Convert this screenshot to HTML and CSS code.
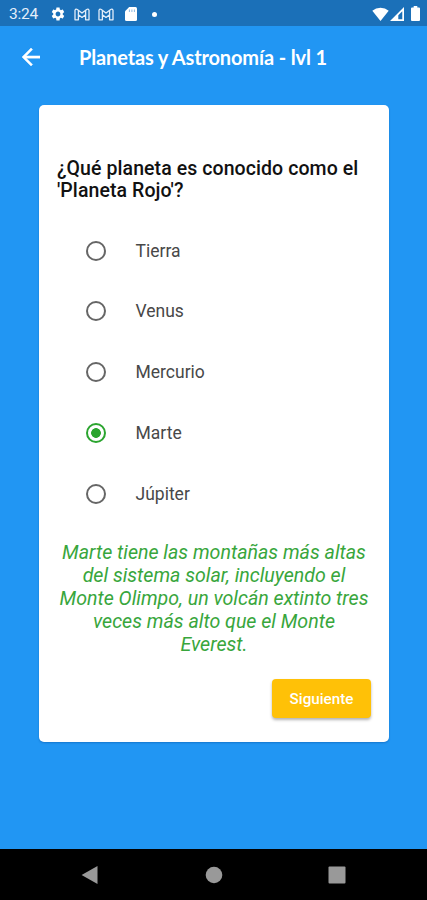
FILE: index.html
```html
<!DOCTYPE html>
<html lang="es">
<head>
  <meta charset="UTF-8" />
  <meta name="viewport" content="width=device-width, initial-scale=1" />
  <title>Planetas y Astronomía</title>
  <link rel="stylesheet" href="styles.css">
</head>
<body>

  <!-- Status bar -->
  <div class="status-bar">
    <span class="clock">3:24</span>
    <svg class="gear" width="16" height="16" viewBox="0 0 24 24" fill="#fff"><path d="M19.14 12.94c.04-.3.06-.61.06-.94 0-.32-.02-.64-.07-.94l2.03-1.58c.18-.14.23-.41.12-.61l-1.92-3.32c-.12-.22-.37-.29-.59-.22l-2.39.96c-.5-.38-1.03-.7-1.62-.94l-.36-2.54c-.04-.24-.24-.41-.48-.41h-3.84c-.24 0-.43.17-.47.41l-.36 2.54c-.59.24-1.13.57-1.62.94l-2.39-.96c-.22-.08-.47 0-.59.22L2.74 8.87c-.12.21-.08.47.12.61l2.03 1.58c-.05.3-.09.63-.09.94s.02.64.07.94l-2.03 1.58c-.18.14-.23.41-.12.61l1.92 3.32c.12.22.37.29.59.22l2.39-.96c.5.38 1.03.7 1.62.94l.36 2.54c.05.24.24.41.48.41h3.84c.24 0 .44-.17.47-.41l.36-2.54c.59-.24 1.13-.56 1.62-.94l2.39.96c.22.08.47 0 .59-.22l1.92-3.32c.12-.22.07-.47-.12-.61l-2.01-1.58zM12 15.6c-1.98 0-3.6-1.62-3.6-3.6s1.62-3.6 3.6-3.6 3.6 1.62 3.6 3.6-1.62 3.6-3.6 3.6z"/></svg>
    <svg class="mail" width="16" height="13" viewBox="0 0 16 13" fill="none" stroke="#e3eefa" stroke-width="1.3" stroke-linejoin="round"><path d="M1 2.2Q1.800.6 3.300 1.500L8 5 12.700 1.500Q14.200.6 15 2.200V11.800H11.600V6.700L8 9.400 4.400 6.700V11.800H1Z"/><path d="M4.400 2.400V6.700M11.600 2.400V6.700"/></svg>
    <svg class="mail" width="16" height="13" viewBox="0 0 16 13" fill="none" stroke="#e3eefa" stroke-width="1.3" stroke-linejoin="round"><path d="M1 2.2Q1.800.6 3.300 1.500L8 5 12.700 1.500Q14.200.6 15 2.200V11.800H11.600V6.700L8 9.400 4.400 6.700V11.800H1Z"/><path d="M4.400 2.400V6.700M11.600 2.400V6.700"/></svg>
    <svg class="sdcard" width="12" height="14" viewBox="0 0 12 14"><path fill="#fff" d="M4.200 0H10.500Q12 0 12 1.500V12.500Q12 14 10.500 14H1.500Q0 14 0 12.500V4.200Z"/><path stroke="#8ab8e0" stroke-width="1" d="M4.400 2.500V5M6.900 2.500V5M9.400 2.500V5"/></svg>
    <span class="dot"></span>
    <span class="signals">
      <svg width="17" height="14" viewBox="0 0 17 14" fill="#fff"><path d="M8.500 14 .3 3.800Q3.800.7 8.500.7T16.700 3.800Z"/></svg>
      <svg class="cell" width="14" height="14" viewBox="0 0 14 14"><path fill="#fff" fill-rule="evenodd" d="M0 14 14 0V14ZM8.300 12.300H12.300V4.200L8.300 8.200Z"/></svg>
      <svg class="battery" width="9" height="15" viewBox="0 0 9 15" fill="#fff"><path d="M2.700 0H6.300V1.500H8Q9 1.500 9 2.500V14Q9 15 8 15H1Q0 15 0 14V2.500Q0 1.500 1 1.500H2.700Z"/></svg>
    </span>
  </div>

  <header class="app-bar">
    <svg class="back" width="18" height="18" viewBox="4 4 16 16" fill="#fff" stroke="#fff" stroke-width=".4"><path d="M20 11H7.830l5.590-5.590L12 4l-8 8 8 8 1.410-1.410L7.830 13H20v-2z"/></svg>
    <h1>Planetas y Astronomía - lvl 1</h1>
  </header>

  <main>
    <div class="card">
      <h2 class="question">¿Qué planeta es conocido como el<br>'Planeta Rojo'?</h2>

      <div class="options">
        <label class="option"><span class="radio"></span>Tierra</label>
        <label class="option"><span class="radio"></span>Venus</label>
        <label class="option"><span class="radio"></span>Mercurio</label>
        <label class="option"><span class="radio selected"></span>Marte</label>
        <label class="option"><span class="radio"></span>Júpiter</label>
      </div>

      <p class="explanation">Marte tiene las montañas más altas<br>del sistema solar, incluyendo el<br>Monte Olimpo, un volcán extinto tres<br>veces más alto que el Monte<br>Everest.</p>

      <button class="next">Siguiente</button>
    </div>
  </main>

  <!-- Navigation bar -->
  <nav class="nav-bar">
    <svg width="18" height="20" viewBox="0 0 18 20" fill="#999"><path d="M.6 10 16.500 1V19Z"/></svg>
    <svg width="18" height="18" viewBox="0 0 18 18" fill="#999"><circle cx="9" cy="9" r="8.300"/></svg>
    <svg width="18" height="18" viewBox="0 0 18 18" fill="#999"><rect x=".5" y=".5" width="17" height="17" rx="1"/></svg>
  </nav>

</body>
</html>
```
FILE: styles.css
```css
* {
  box-sizing: border-box;
}

body {
  margin: 0;
  height: 900px;
  display: flex;
  flex-direction: column;
  background: #2196f3;
  font-family: Roboto, sans-serif;
  overflow: hidden;
}

.status-bar {
  height: 26px;
  flex: none;
  display: flex;
  align-items: center;
  padding: 2px 7px 0 9px;
  background: #1b70b8;
  color: #e3eefa;
}

.clock {
  width: 41px;
  font-size: 15.5px;
  letter-spacing: -0.2px;
}

.mail {
  margin-left: 8px;
}

.sdcard {
  margin-left: 11px;
}

.dot {
  width: 5px;
  height: 5px;
  margin-left: 15px;
  border-radius: 50%;
  background: #fff;
}

.signals {
  display: flex;
  align-items: center;
  margin-left: auto;
  margin-top: -1px;
}

.cell {
  margin-left: 1px;
}

.battery {
  margin-left: 7px;
}

.app-bar {
  height: 61px;
  flex: none;
  display: flex;
  align-items: center;
  padding-left: 22px;
}

.app-bar h1 {
  margin: 0 0 0 39px;
  font: bold 20px Lato, sans-serif;
  letter-spacing: -0.14px;
  color: #fff;
  white-space: nowrap;
}

main {
  flex: 1;
  padding: 17.5px 38.5px 0 39px;
}

.card {
  height: 637.5px;
  display: flex;
  flex-direction: column;
  padding: 53px 17.5px 0 18px;
  border-radius: 5px;
  background: #fff;
  box-shadow: 0 1px 2px rgba(0, 70, 150, 0.4);
}

.question {
  margin: 0;
  font-size: 19.5px;
  font-weight: 500;
  line-height: 22.6px;
  letter-spacing: 0.08px;
  color: #111;
  white-space: nowrap;
}

.options {
  margin-top: 17.5px;
}

.option {
  height: 60.8px;
  display: flex;
  align-items: center;
  padding-left: 29px;
  font-size: 17.5px;
  color: #484848;
}

.radio {
  width: 20px;
  height: 20px;
  margin-right: 29.5px;
  border: 2px solid #666;
  border-radius: 50%;
}

.radio.selected {
  border-color: #2ba52f;
  background: radial-gradient(circle, #2ba52f 4.5px, transparent 5.2px);
}

.explanation {
  margin: 18px 0 0;
  font-size: 19.6px;
  font-style: italic;
  line-height: 22.85px;
  text-align: center;
  color: #38a63c;
  white-space: nowrap;
}

.next {
  width: 99px;
  height: 39px;
  margin-top: 23px;
  padding-top: 2px;
  align-self: flex-end;
  border: none;
  border-radius: 4px;
  background: #ffc107;
  color: #fff;
  font: 500 15.2px Roboto, sans-serif;
  box-shadow: 0 2px 3px rgba(0, 0, 0, 0.3);
}

.nav-bar {
  height: 51px;
  flex: none;
  display: flex;
  align-items: center;
  justify-content: space-between;
  padding: 0 81px;
  background: #000;
}
```
